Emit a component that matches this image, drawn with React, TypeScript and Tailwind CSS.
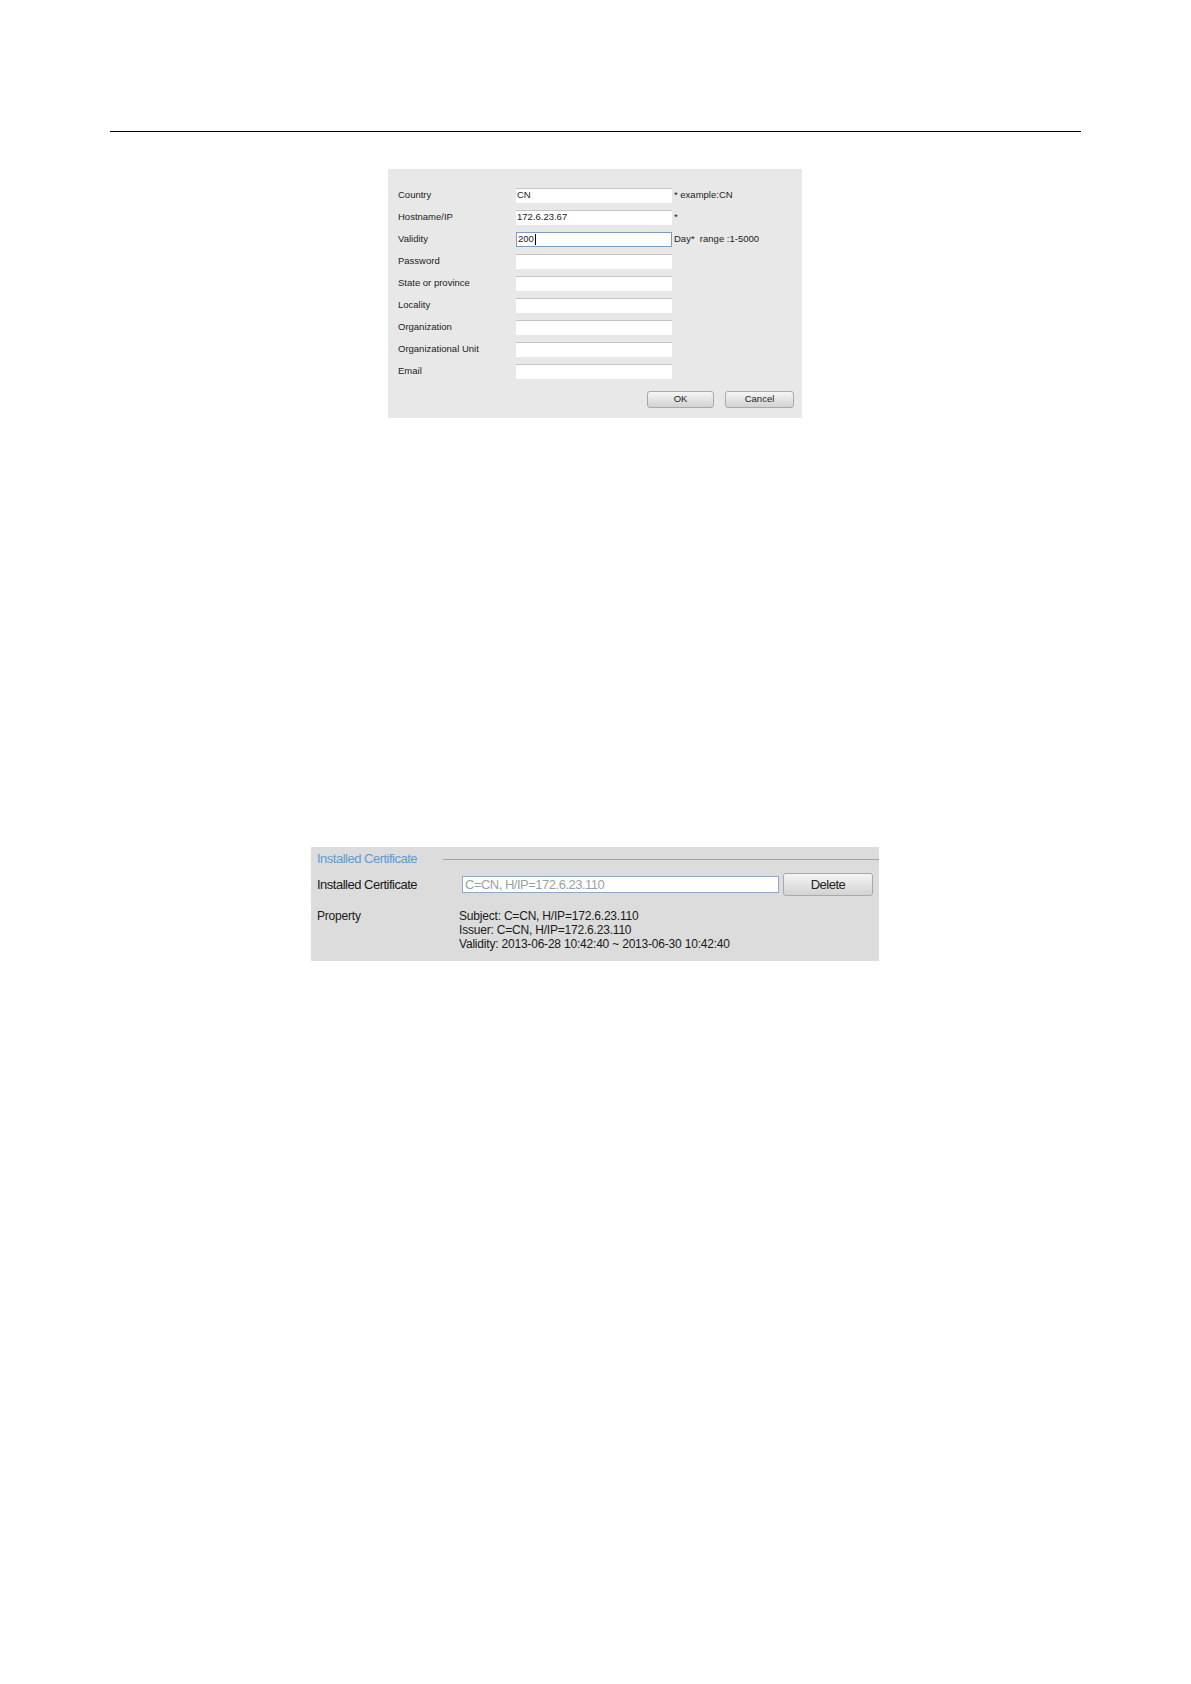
const fields = [
  { label: "Country", value: "CN", hint: "* example:CN" },
  { label: "Hostname/IP", value: "172.6.23.67", hint: "*" },
  { label: "Validity", value: "200", hint: "Day*  range :1-5000", focused: true },
  { label: "Password", value: "" },
  { label: "State or province", value: "" },
  { label: "Locality", value: "" },
  { label: "Organization", value: "" },
  { label: "Organizational Unit", value: "" },
  { label: "Email", value: "" },
];

function GrayButton({ label, className }: { label: string; className: string }) {
  return (
    <div
      className={
        "flex items-center justify-center rounded-[3px] border border-[#a9a9a9] bg-gradient-to-b from-[#f6f6f6] to-[#d2d2d2] text-[#222] " +
        className
      }
    >
      {label}
    </div>
  );
}

function CreateDialog() {
  return (
    <div className="ml-[388px] mt-[37px] w-[414px] h-[249px] bg-[#e8e8e8] pt-[15px] pl-[10px] pr-[8px] text-[9.5px] text-[#222]">
      {fields.map((f) => (
        <div key={f.label} className="flex h-[22px] items-center">
          <div className="w-[118px]">{f.label}</div>
          <div
            className={
              "flex h-[15px] w-[156px] items-center bg-white pl-[1px] " +
              (f.focused
                ? "border border-[#7c9cc4]"
                : "border-t border-[#c4c4c4]")
            }
          >
            {f.value}
            {f.focused && <span className="ml-[1px] h-[11px] w-px bg-black" />}
          </div>
          {f.hint && <div className="ml-[2px] whitespace-pre">{f.hint}</div>}
        </div>
      ))}
      <div className="mt-[9px] flex justify-end gap-[11px]">
        <GrayButton label="OK" className="h-[17px] w-[67px]" />
        <GrayButton label="Cancel" className="h-[17px] w-[69px]" />
      </div>
    </div>
  );
}

function InstalledCertificate() {
  return (
    <div className="ml-[311px] mt-[429px] w-[568px] h-[114px] bg-[#dcdcdc] pt-[4px] pl-[6px] pr-[6px] text-[#1a1a1a]">
      <div className="flex h-[16px] items-center">
        <div className="w-[126px] text-[13px] tracking-[-0.5px] text-[#5b9bd5]">
          Installed Certificate
        </div>
        <div className="mr-[-6px] flex-1 border-t border-[#a3a3a3]" />
      </div>
      <div className="mt-[6px] flex h-[23px] items-center">
        <div className="w-[145px] text-[13px] tracking-[-0.5px]">Installed Certificate</div>
        <div className="flex h-[17px] w-[317px] items-center border border-[#8fa8c6] bg-white pl-[2px] text-[13px] tracking-[-0.5px] text-[#a0a0a0]">
          C=CN, H/IP=172.6.23.110
        </div>
        <GrayButton label="Delete" className="ml-[4px] h-[23px] w-[90px] text-[13px] tracking-[-0.5px]" />
      </div>
      <div className="mt-[13px] flex text-[12px] leading-[14px] tracking-[-0.2px]">
        <div className="w-[142px]">Property</div>
        <div>
          <div>Subject: C=CN, H/IP=172.6.23.110</div>
          <div>Issuer: C=CN, H/IP=172.6.23.110</div>
          <div>Validity: 2013-06-28 10:42:40 ~ 2013-06-30 10:42:40</div>
        </div>
      </div>
    </div>
  );
}

export default function App() {
  return (
    <div className="w-[1191px] h-[1684px] bg-white font-['Liberation_Sans',Arial,sans-serif] overflow-hidden">
      <div className="px-[110px] pt-[131px]">
        <div className="border-t border-black" />
      </div>
      <CreateDialog />
      <InstalledCertificate />
    </div>
  );
}
